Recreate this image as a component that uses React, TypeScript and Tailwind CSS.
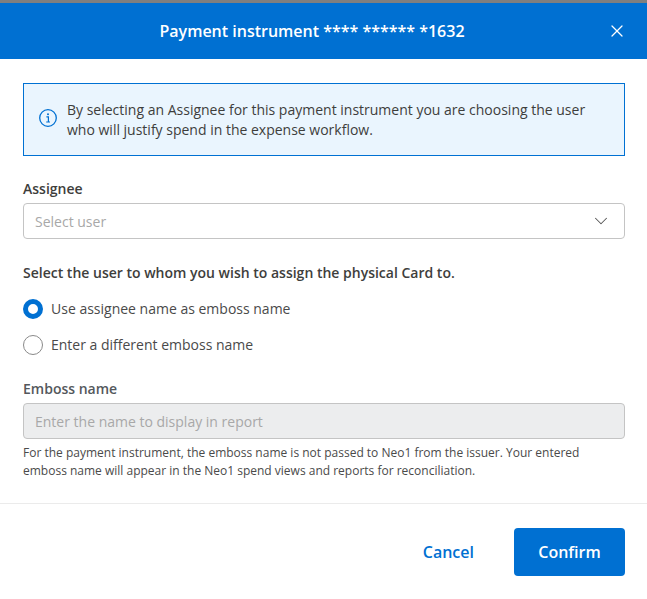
import { ChevronDown, X } from "lucide-react";

function Radio({ checked, label }: { checked?: boolean; label: string }) {
  return (
    <div className="flex h-5 items-center gap-2">
      <span
        className={`box-border h-5 w-5 shrink-0 rounded-full bg-white ${
          checked ? "border-[5px] border-[#0070d2]" : "border border-[#8a8a8a]"
        }`}
      />
      <span className="text-[14px] leading-5 text-[#4a4a4a]">{label}</span>
    </div>
  );
}

export default function App() {
  return (
    <div className="flex h-[599px] w-[647px] flex-col overflow-hidden bg-white font-['Open_Sans','Noto_Sans',sans-serif]">
      <div className="h-[3px] bg-[#7f7f7f]" />
      <header className="relative flex h-[56px] items-center justify-center bg-[#0070d2] pr-[23px]">
        <h1 className="text-[16px] font-semibold text-white">
          Payment instrument **** ****** *1632
        </h1>
        <button className="absolute right-5 top-[18px] text-white">
          <X size={20} strokeWidth={1.5} />
        </button>
      </header>

      <main className="flex flex-1 flex-col pl-[23px] pr-[22px] pt-6">
        <div className="flex h-[73px] items-center gap-[10px] border border-solid border-[#0071d3] bg-[#eaf5fe] px-[15px]">
          <svg width="18" height="18" viewBox="0 0 18 18" fill="none" className="mb-[3px] shrink-0">
            <circle cx="9" cy="9" r="8.3" stroke="#0070d2" strokeWidth="1.3" />
            <circle cx="9" cy="5.2" r="1" fill="#0070d2" />
            <path d="M7.4 7.8H9.4V12.8M7.2 13H11" stroke="#0070d2" strokeWidth="1.2" />
          </svg>
          <p className="text-[14px] leading-5 text-[#3e3e3c]">
            By selecting an Assignee for this payment instrument you are choosing the user
            <br />
            who will justify spend in the expense workflow.
          </p>
        </div>

        <label className="mt-[23px] text-[14px] font-semibold leading-5 text-[#3e3e3c]">Assignee</label>
        <div className="mt-[4px] flex h-9 items-center justify-between rounded-[4px] border border-[#c4c4c4] pl-[11px] pr-3">
          <span className="text-[14px] text-[#a8a8a8]">Select user</span>
          <ChevronDown size={22} strokeWidth={1.1} className="text-[#555]" />
        </div>

        <p className="mt-6 text-[14px] font-semibold leading-5 text-[#3e3e3c]">
          Select the user to whom you wish to assign the physical Card to.
        </p>
        <div className="mt-4 flex flex-col gap-4">
          <Radio checked label="Use assignee name as emboss name" />
          <Radio label="Enter a different emboss name" />
        </div>

        <label className="mt-6 text-[14px] font-semibold leading-5 text-[#54585c]">Emboss name</label>
        <div className="mt-1 flex h-9 items-center rounded-[4px] border border-[#c4c4c4] bg-[#ecedee] pl-[11px]">
          <span className="text-[14px] text-[#a8a8a8]">Enter the name to display in report</span>
        </div>
        <p className="mt-[5px] text-[12px] leading-[18px] text-[#4a4a4a]">
          For the payment instrument, the emboss name is not passed to Neo1 from the issuer. Your entered
          <br />
          emboss name will appear in the Neo1 spend views and reports for reconciliation.
        </p>
      </main>

      <footer className="flex h-[96px] items-start justify-end gap-10 border-t border-[#ebebeb] px-[22px] pt-6">
        <button className="h-12 text-[16px] font-semibold text-[#0070d2]">Cancel</button>
        <button className="h-12 w-[111px] rounded-[4px] bg-[#0070d2] text-[16px] font-semibold text-white">
          Confirm
        </button>
      </footer>
    </div>
  );
}
